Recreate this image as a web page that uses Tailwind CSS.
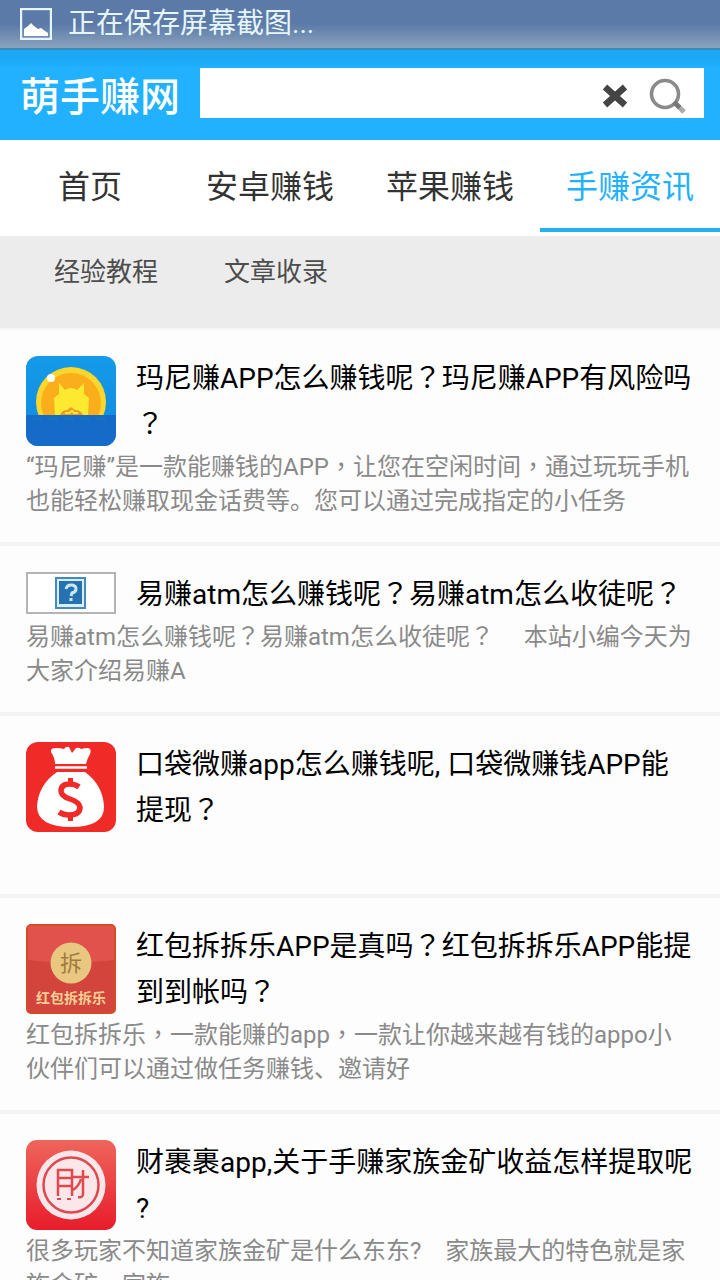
<!DOCTYPE html>
<html lang="zh-CN">
<head>
    <meta charset="UTF-8">
    <meta name="viewport" content="width=device-width, initial-scale=1.0">
    <title>萌手赚网</title>
    <script src="https://cdn.jsdelivr.net/npm/@tailwindcss/browser@4"></script>
</head>
<body class="bg-[#fdfdfd] font-[Roboto,'Noto_Sans_CJK_SC',sans-serif] overflow-x-hidden">
    <!-- Status bar -->
    <div class="flex h-[50px] items-center gap-4 border-b-2 border-[#3d8bb5] bg-linear-to-b from-[#5b7aa8] from-50% to-[#8aa3bd] pl-5 text-[28px] text-[#e6f6fa]">
        <svg class="size-8" viewBox="0 0 32 32" fill="none">
            <rect x="1" y="1" width="30" height="30" stroke="#e6f6fa" stroke-width="2.4"/>
            <path d="M4 28v-7l4-3 3-3 3 3 4 3 3-1 4 3 3 2v3z" fill="#fff"/>
        </svg>
        <span class="leading-[46px]">正在保存屏幕截图...</span>
    </div>

    <!-- Header -->
    <header class="flex h-[90px] items-start bg-linear-to-b from-[#1ba8f5] from-10% to-[#22b1ff] to-20% px-4 pt-[18px]">
        <h1 class="w-[184px] pl-1 text-[40px] leading-[60px] font-medium text-white">萌手赚网</h1>
        <form class="flex h-[50px] flex-1 items-center bg-white pt-1.5 pr-4">
            <input type="text" aria-label="搜索" class="h-full min-w-0 flex-1 px-3 text-[28px] outline-none">
            <button type="reset" aria-label="清除" class="mr-5">
                <svg class="h-[30px] w-7" viewBox="0 0 28 30">
                    <path d="M5 6l20 18M25 6L5 24" stroke="#444" stroke-width="6.5"/>
                </svg>
            </button>
            <button type="submit" aria-label="搜索">
                <svg class="size-10" viewBox="0 0 40 40" fill="none">
                    <circle cx="17" cy="18" r="13.5" stroke="#8a8a8a" stroke-width="3.6"/>
                    <path d="M26 26l6 6" stroke="#777" stroke-width="5"/>
                    <path d="M32 32l4 4" stroke="#aaa" stroke-width="5"/>
                </svg>
            </button>
        </form>
    </header>

    <!-- Tabs -->
    <nav class="grid grid-cols-4 bg-white pb-1 text-center text-[32px] leading-[94px] text-[#333]">
        <a href="#" class="block h-[92px]">首页</a>
        <a href="#" class="block h-[92px]">安卓赚钱</a>
        <a href="#" class="block h-[92px]">苹果赚钱</a>
        <a href="#" class="block h-[92px] border-b-4 border-[#22b1ee] text-[#22b1ff]">手赚资讯</a>
    </nav>
    <nav class="flex h-[94px] gap-[66px] border-b-2 border-[#f5f5f5] bg-[#ececec] pl-[54px] text-[26px] leading-[72px] text-[#4d4d4d]">
        <a href="#">经验教程</a>
        <a href="#">文章收录</a>
    </nav>

    <!-- Articles. zh-TW on a mark centres it in its cell -->
    <main class="[line-break:anywhere]">
        <article class="border-b-4 border-[#f3f3f3] px-[26px] pb-6 pt-[26px]">
            <a href="#" class="flex gap-5">
                <svg class="size-[90px] shrink-0" viewBox="0 0 90 90">
                    <defs>
                        <linearGradient id="sky" x2="0" y2="1"><stop stop-color="#149be9"/><stop offset="1" stop-color="#1189dc"/></linearGradient>
                        <clipPath id="tile"><rect width="90" height="90" rx="12"/></clipPath>
                        <clipPath id="slot"><path d="M0 0h90v59H0z"/></clipPath>
                    </defs>
                    <g clip-path="url(#tile)">
                        <path d="M0 0h90v90H0z" fill="url(#sky)"/>
                        <g clip-path="url(#slot)">
                            <circle cx="45" cy="46" r="35" fill="#fbd72b"/>
                            <circle cx="45" cy="47" r="30" fill="#fbae1c"/>
                            <path d="M33 27l6 7q6-4 12 0l7-7v11l5 4-1 17H29l-1-17 5-4z" fill="#fde930"/>
                            <path d="M34 59q2-5 7-5l4-3 4 3q6 0 8 5z" fill="#f09c22"/>
                            <path d="M39 57h4l3-2 2 2h4" stroke="#fde930" stroke-width="2" fill="none"/>
                        </g>
                        <path d="M0 59h90v31H0z" fill="#166bc8"/>
                        <path d="M7 63h75" stroke="#1285b5" stroke-width="1" stroke-dasharray="9 7"/>
                        <circle cx="25" cy="22" r="4" fill="#fff"/>
                    </g>
                </svg>
                <h2 class="flex-1 text-[28px] leading-[46px] text-black">玛尼赚APP怎么赚钱呢<span lang="zh-TW">？</span>玛尼赚APP有风险吗<span lang="zh-TW">？</span></h2>
            </a>
            <p class="mt-[2px] min-h-[34px] text-2xl leading-[34px] text-[#8a8a8a]">“玛尼赚”是一款能赚钱的APP<span lang="zh-TW">，</span>让您在空闲时间<span lang="zh-TW">，</span>通过玩玩手机也能轻松赚取现金话费等。您可以通过完成指定的小任务</p>
        </article>

        <article class="border-b-4 border-[#f3f3f3] px-[26px] pb-6 pt-[26px]">
            <a href="#" class="flex gap-5">
                <svg class="h-[42px] w-[90px] shrink-0" viewBox="0 0 90 42">
                    <rect x="1" y="1" width="88" height="40" fill="#fff" stroke="#b4b4b4" stroke-width="2"/>
                    <rect x="29" y="5" width="31" height="32" fill="#4689bb"/>
                    <rect x="31" y="7" width="27" height="28" fill="#d8eefa"/>
                    <rect x="33" y="9" width="23" height="23" fill="#2672b0"/>
                    <path d="M40 17q1-4 5-4 5 0 5 4 0 3-4 4l-1 3M45 26v3" stroke="#cbe7f5" stroke-width="3" fill="none"/>
                </svg>
                <h2 class="flex-1 text-[28px] leading-[46px] text-black">易赚atm怎么赚钱呢<span lang="zh-TW">？</span>易赚atm怎么收徒呢<span lang="zh-TW">？</span></h2>
            </a>
            <p class="mt-[2px] min-h-[34px] text-2xl leading-[34px] text-[#8a8a8a]">易赚atm怎么赚钱呢<span lang="zh-TW">？</span>易赚atm怎么收徒呢<span lang="zh-TW">？</span>&nbsp;&nbsp;&nbsp;&nbsp; 本站小编今天为大家介绍易赚A</p>
        </article>

        <article class="border-b-4 border-[#f3f3f3] px-[26px] pb-6 pt-[26px]">
            <a href="#" class="flex gap-5">
                <svg class="size-[90px] shrink-0" viewBox="0 0 90 90">
                    <rect width="90" height="90" rx="12" fill="#f02b27"/>
                    <path d="M29 22q0-6-4-12-1-4 5-4 5 0 8 1 2-3 5-2l3 6 4-5q3-1 5 1 4-1 7-1 4 1 2 6-3 5-4 10z" fill="#fff"/>
                    <path d="M29 25.500h32" stroke="#fff" stroke-width="2.500"/>
                    <path d="M31 30h28q18 13 19 35 0 20-33 20T11 65q1-22 20-35z" fill="#fff"/>
                    <path d="M53 45q-4-3-9-3-9 0-9 7 0 5 9 8t10 8q0 8-11 8-6 0-10-3" stroke="#f02b27" stroke-width="5.500" fill="none"/>
                    <path d="M44.500 36v6M44.500 72v7" stroke="#f02b27" stroke-width="5"/>
                </svg>
                <h2 class="flex-1 text-[28px] leading-[46px] text-black">口袋微赚app怎么赚钱呢, 口袋微赚钱APP能提现<span lang="zh-TW">？</span></h2>
            </a>
            <p class="mt-[2px] min-h-[34px] text-2xl leading-[34px] text-[#8a8a8a]"></p>
        </article>

        <article class="border-b-4 border-[#f3f3f3] px-[26px] pb-6 pt-[26px]">
            <a href="#" class="flex gap-5">
                <svg class="size-[90px] shrink-0" viewBox="0 0 90 90">
                    <rect x="1" y="1" width="88" height="88" rx="4" fill="#d2443c" stroke="#d64a25" stroke-width="2"/>
                    <path d="M2 2h86v34q-43 6-86 0z" fill="#e1524c"/>
                    <circle cx="45" cy="39" r="20.500" fill="#e8c880"/>
                    <text x="45" y="47" font-size="22" text-anchor="middle" fill="#a07a40">拆</text>
                    <text x="45" y="79" font-size="14" font-weight="700" text-anchor="middle" fill="#f8cf94">红包拆拆乐</text>
                </svg>
                <h2 class="flex-1 text-[28px] leading-[46px] text-black">红包拆拆乐APP是真吗<span lang="zh-TW">？</span>红包拆拆乐APP能提到到帐吗<span lang="zh-TW">？</span></h2>
            </a>
            <p class="mt-[2px] min-h-[34px] text-2xl leading-[34px] text-[#8a8a8a]">红包拆拆乐<span lang="zh-TW">，</span>一款能赚的app<span lang="zh-TW">，</span>一款让你越来越有钱的appo小伙伴们可以通过做任务赚钱、邀请好</p>
        </article>

        <article class="border-b-4 border-[#f3f3f3] px-[26px] pb-6 pt-[26px]">
            <a href="#" class="flex gap-5">
                <svg class="size-[90px] shrink-0" viewBox="0 0 90 90">
                    <defs>
                        <linearGradient id="red" x2="0" y2="1"><stop stop-color="#ef655c"/><stop offset="1" stop-color="#e81c2b"/></linearGradient>
                    </defs>
                    <rect width="90" height="90" rx="11" fill="url(#red)"/>
                    <circle cx="45" cy="45" r="34.500" fill="#fbe6ea"/>
                    <circle cx="45" cy="45" r="27.500" fill="none" stroke="#df4850" stroke-width="2.500"/>
                    <path d="M32 56V30h14v26M32 38h14M32 46h14M46 37h17M57 30v24q0 4-5 3M55 39q-2 7-8 11" stroke="#e04a4d" stroke-width="2.500" fill="none"/>
                    <path d="M31 59h4M41 59h4" stroke="#e04a4d" stroke-width="2"/>
                </svg>
                <h2 class="flex-1 text-[28px] leading-[46px] text-black">财裹裹app,关于手赚家族金矿收益怎样提取呢?</h2>
            </a>
            <p class="mt-[2px] min-h-[34px] text-2xl leading-[34px] text-[#8a8a8a]">很多玩家不知道家族金矿是什么东东?&nbsp;&nbsp;&nbsp; 家族最大的特色就是家族金矿<span lang="zh-TW">，</span>家族</p>
        </article>
    </main>
</body>
</html>
